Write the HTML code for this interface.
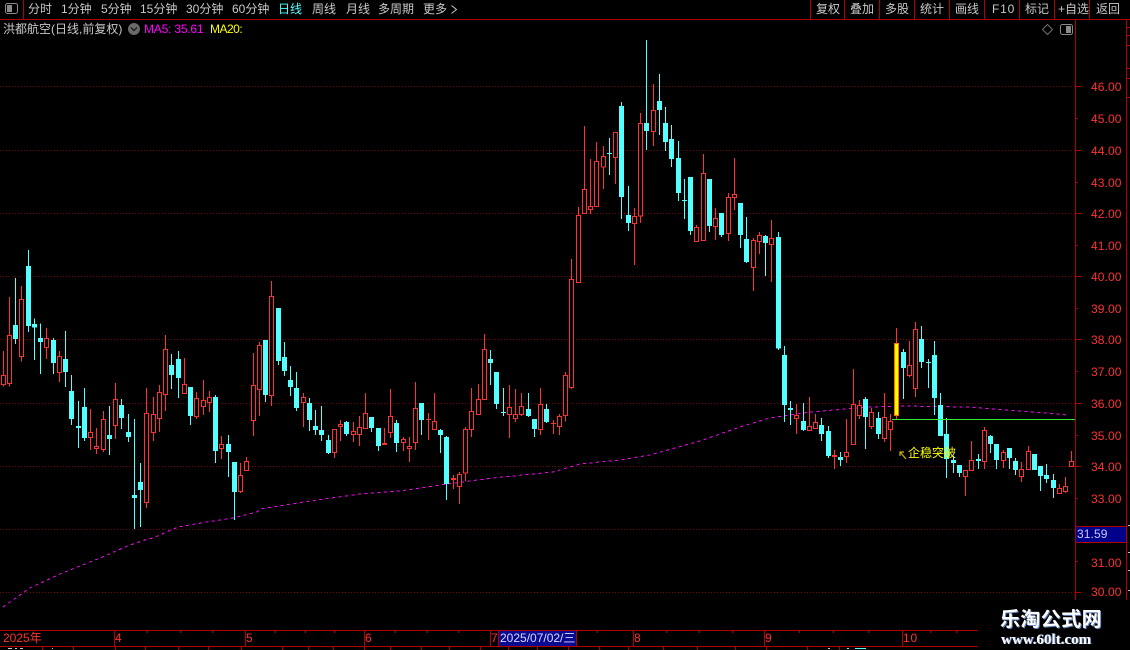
<!DOCTYPE html>
<html><head><meta charset="utf-8">
<style>
html,body{margin:0;padding:0;background:#000;width:1130px;height:650px;overflow:hidden}
#p{position:relative;width:1130px;height:650px;overflow:hidden;background:#000;font-family:"Liberation Sans","WenQuanYi Zen Hei","Noto Sans CJK SC",sans-serif;font-size:12px;color:#c8c8c8}
#p span{position:absolute;white-space:nowrap;line-height:14px;height:14px}
.t span{top:2px}
.a span{left:1091px;color:#ff3232;letter-spacing:.1px}
.b span{top:631px;color:#ff3232}
svg{position:absolute;left:0;top:0}
</style></head><body><div id="p">
<svg width="1130" height="650" viewBox="0 0 1130 650" fill="none">
<g stroke="#780000" stroke-dasharray="1 2" shape-rendering="crispEdges">
<path d="M0 86.5H1075M0 150.5H1075M0 213.5H1075M0 276.5H1075M0 339.5H1075M0 403.5H1075M0 466.5H1075M0 529.5H1075M0 592.5H1075"/>
</g>
<path stroke="#ff00ff" stroke-dasharray="3 3.5" shape-rendering="crispEdges" d="M3 607L30 588L60 574L100 558L130 545L148 539L153 538L178 527L207 522L233 518L257 512L260 509L310 501L360 494L400 491L447 484L493 478L553 472L580 464L620 460L650 455L700 441L740 427L770 418L810 412L870 407L900 406L970 407L1020 411L1068 415"/>
<g stroke-width="3" shape-rendering="crispEdges">
<g transform="translate(.167,240) scale(.33333)">
<path stroke="#ff3232" d="M10 333V440M28 171V440M64 138V365M139 264V357M178 333V426M271 507V630M289 564V642M310 513V636M346 429V597M439 444V804M460 471V603M478 435V576M496 285V513M553 354V461M589 456V537M610 420V525M628 453V516M664 588V657M721 669V759M739 651V693M760 339V588M778 306V528"/>
<path stroke="#ff3232" fill="#000" d="M4 407h12V433h-12zM22 287h12V430h-12zM58 179h12V349h-12zM133 296h12V322h-12zM172 350h12V398h-12zM265 578h12V592h-12zM283 620h12V625h-12zM304 539h12V628h-12zM340 479h12V556h-12zM433 521h12V787h-12zM454 524h12V577h-12zM472 458h12V535h-12zM490 329h12V463h-12zM547 434h12V460h-12zM583 476h12V529h-12zM604 482h12V499h-12zM622 473h12V487h-12zM658 614h12V625h-12zM715 707h12V754h-12zM733 665h12V691h-12zM754 437h12V541h-12zM772 317h12V448h-12z"/>
<path stroke="#54ffff" d="M46 114V312M85 30V276M103 235V360M121 250V402M160 294V402M196 273V441M214 405V555M235 483V624M253 444V603M328 498V645M364 477V567M385 522V606M403 537V867M421 669V861M514 342V447M535 333V474M571 441V555M646 465V669M685 585V711M703 666V840"/>
<path stroke="#54ffff" fill="#54ffff" d="M40 256h12V296h-12zM79 79h12V257h-12zM97 253h12V261h-12zM115 295h12V305h-12zM154 301h12V368h-12zM190 358h12V395h-12zM208 454h12V536h-12zM229 559h12V563h-12zM247 502h12V593h-12zM322 586h12V596h-12zM358 496h12V533h-12zM379 577h12V590h-12zM397 766h12V773h-12zM415 727h12V749h-12zM508 376h12V404h-12zM529 358h12V413h-12zM565 442h12V527h-12zM640 472h12V632h-12zM679 613h12V635h-12zM697 667h12V755h-12z"/>
</g>
<g transform="translate(260.167,280) scale(.33333)">
<path stroke="#ff3232" d="M34 3V378M130 339V441M223 447V534M241 420V483M280 426V486M298 408V498M316 339V447M373 444V495M391 327V474M430 471V513M448 471V546M466 306V510M505 399V480M523 339V450M580 585V627M598 576V672M616 441V603M634 324V471M655 312V405M673 162V360M748 315V474M766 327V426M784 339V408M841 324V465M880 420V462M898 402V465M916 276V425"/>
<path stroke="#ff3232" fill="#000" d="M28 50h12V346h-12zM124 353h12V368h-12zM217 449h12V517h-12zM235 434h12V439h-12zM274 455h12V464h-12zM292 443h12V464h-12zM310 401h12V445h-12zM367 490h12V494h-12zM385 410h12V457h-12zM424 479h12V487h-12zM442 500h12V506h-12zM460 386h12V487h-12zM499 418h12V419h-12zM517 425h12V448h-12zM574 595h12V599h-12zM592 584h12V619h-12zM610 449h12V579h-12zM628 395h12V448h-12zM649 359h12V403h-12zM667 209h12V358h-12zM742 383h12V403h-12zM760 404h12V415h-12zM778 380h12V403h-12zM835 374h12V448h-12zM874 430h12V431h-12zM892 410h12V439h-12zM910 286h12V407h-12z"/>
<path stroke="#54ffff" d="M16 180V366M55 84V255M73 186V288M91 258V348M109 276V393M148 354V453M166 390V465M184 378V483M205 465V522M259 423V468M334 411V456M355 444V513M409 420V516M484 369V465M541 447V519M559 468V660M691 210V315M709 276V387M730 324V408M805 339V411M823 417V471M859 372V429"/>
<path stroke="#54ffff" fill="#54ffff" d="M10 181h12V344h-12zM49 85h12V242h-12zM67 232h12V272h-12zM85 301h12V320h-12zM103 325h12V383h-12zM142 370h12V419h-12zM160 439h12V449h-12zM178 451h12V464h-12zM199 481h12V518h-12zM253 427h12V461h-12zM328 412h12V443h-12zM349 445h12V497h-12zM403 430h12V488h-12zM478 370h12V419h-12zM535 451h12V464h-12zM553 472h12V611h-12zM685 238h12V248h-12zM703 277h12V371h-12zM724 397h12V398h-12zM799 388h12V407h-12zM817 418h12V446h-12zM853 388h12V425h-12z"/>
</g>
<g transform="translate(560.167,30) scale(.33333)">
<path stroke="#ff3232" d="M34 687V1077M55 531V759M73 288V552M91 387V552M109 336V531M130 348V477M166 307V462M223 534V705M241 249V579M280 162V348M409 585V636M430 372V633M466 534V630M505 489V633M523 384V540M580 624V783M598 606V672M634 570V756"/>
<path stroke="#ff3232" fill="#000" d="M28 748h12V1073h-12zM49 557h12V757h-12zM67 479h12V550h-12zM85 530h12V538h-12zM103 395h12V529h-12zM124 380h12V411h-12zM160 308h12V383h-12zM217 560h12V580h-12zM235 281h12V558h-12zM274 242h12V304h-12zM403 593h12V634h-12zM424 431h12V631h-12zM460 566h12V589h-12zM499 503h12V610h-12zM517 494h12V502h-12zM574 632h12V712h-12zM592 617h12V634h-12zM628 626h12V643h-12z"/>
<path stroke="#54ffff" d="M148 324V435M184 216V567M205 468V603M259 30V360M298 132V315M316 231V363M334 285V411M355 333V513M373 447V567M391 441V615M448 447V606M484 549V621M541 519V654M559 561V699M616 615V738M655 606V960"/>
<path stroke="#54ffff" fill="#54ffff" d="M142 370h12V371h-12zM178 229h12V500h-12zM199 556h12V578h-12zM253 280h12V302h-12zM292 214h12V239h-12zM310 280h12V335h-12zM328 328h12V386h-12zM349 385h12V488h-12zM367 511h12V512h-12zM385 442h12V602h-12zM442 448h12V587h-12zM478 550h12V614h-12zM535 520h12V614h-12zM553 628h12V695h-12zM610 619h12V638h-12zM649 622h12V954h-12z"/>
</g>
<g transform="translate(770.167,310) scale(.33333)">
<path stroke="#ff3232" d="M79 282V372M118 261V363M136 312V357M193 420V477M229 327V459M250 177V405M268 270V327M304 294V357M343 249V396M361 312V423M379 54V330M418 93V201M436 36V261M586 480V558M604 393V483M643 351V477M700 420V474M754 456V516M775 408V480M868 522V552M886 501V549M904 423V471"/>
<path stroke="#ff3232" fill="#000" d="M73 316h12V326h-12zM112 350h12V361h-12zM130 338h12V356h-12zM187 436h12V440h-12zM223 428h12V440h-12zM244 284h12V403h-12zM262 287h12V317h-12zM298 308h12V350h-12zM337 323h12V386h-12zM355 335h12V359h-12zM412 167h12V197h-12zM430 59h12V235h-12zM580 482h12V499h-12zM598 452h12V481h-12zM637 362h12V454h-12zM694 428h12V451h-12zM748 479h12V499h-12zM769 425h12V478h-12zM862 536h12V550h-12zM880 530h12V544h-12zM898 455h12V469h-12z"/>
<path stroke="#54ffff" d="M43 108V336M61 273V345M100 279V363M154 324V393M175 348V444M211 426V468M286 261V417M325 306V387M400 117V267M454 48V174M475 147V234M493 93V315M511 249V378M529 324V504M550 438V489M568 465V501M625 432V477M661 375V429M679 402V477M718 414V477M736 444V495M793 432V480M811 468V543M829 462V519M850 492V564"/>
<path stroke="#54ffff" fill="#54ffff" d="M37 136h12V284h-12zM55 295h12V299h-12zM94 334h12V359h-12zM148 346h12V371h-12zM169 364h12V437h-12zM205 442h12V449h-12zM280 268h12V320h-12zM319 325h12V371h-12zM394 127h12V173h-12zM448 88h12V155h-12zM469 157h12V158h-12zM487 136h12V263h-12zM505 286h12V377h-12zM523 373h12V446h-12zM544 451h12V458h-12zM562 466h12V488h-12zM619 448h12V452h-12zM655 379h12V401h-12zM673 403h12V449h-12zM712 415h12V443h-12zM730 454h12V479h-12zM787 433h12V479h-12zM805 469h12V497h-12zM823 496h12V506h-12zM844 511h12V533h-12z"/>
<path stroke="#ff7000" fill="#ffff00" d="M373 100h12V317h-12z"/>
</g>
</g>
<g shape-rendering="crispEdges">
<path stroke="#30f030" d="M892 419.5H1075"/>
<path stroke="#b00000" d="M0 19.5H1130M23.5 0V19M810.5 0V19M844.5 0V19M879.5 0V19M914.5 0V19M949.5 0V19M984.5 0V19M1019.5 0V19M1054.5 0V19M1089.5 0V19M1075.5 19V600M1126.5 19V600M0 630.5H978M0 646.5H978M114.5 630V646M245.5 630V646M364.5 630V646M490.5 630V646M633.5 630V646M764.5 630V646M902.5 630V646"/>
<path stroke="#b00000" d="M1075 86.5h6M1075 118.5h3M1075 150.5h6M1075 182.5h3M1075 213.5h6M1075 245.5h3M1075 276.5h6M1075 308.5h3M1075 339.5h6M1075 371.5h3M1075 403.5h6M1075 435.5h3M1075 466.5h6M1075 498.5h3M1075 561.5h3M1075 592.5h6M1127 27.5h3M1127 35.5h3M1127 45.5h3M1127 68.5h3M1127 78.5h3M1127 97.5h3"/>
<path stroke="#b00000" d="M147.500 630v3M180.500 630v3M212.500 630v3M275.500 630v3M305.500 630v3M334.500 630v3M395.500 630v3M427.500 630v3M458.500 630v3M597.500 630v3M666.500 630v3M699.500 630v3M732.500 630v3M799.500 630v3M833.500 630v3M868.500 630v3M930.500 630v3M956.500 630v3M42.500 647v3M73.500 647v3M115.500 647v3M145.500 647v3M178.500 647v3M208.500 647v3M241.500 647v3M282.500 647v3M308.500 647v3M333.500 647v3M364.500 647v3M390.500 647v3M421.500 647v3M449.500 647v3M480.500 647v3M508.500 647v3M537.500 647v3M568.500 647v3M599.500 647v3M628.500 647v3M663.500 647v3M697.500 647v3M735.500 647v3M766.500 647v3M807.500 647v3M839.500 647v3"/>
<path stroke="#c8c8c8" d="M8 648.500h4M15 648.500h2M20 648.500h3M52 648.500h1M828 648.500h2"/>
<path stroke="#54ffff" d="M847 648.500h2M855 648.500h11"/>
<path stroke="#c0c0c0" d="M1128 525.500h2M1128 552.500h2M1128 570.500h2M1128 590.500h2"/>
<rect x="499" y="631" width="77" height="15" fill="#0a0a90"/>
<path stroke="#b00000" d="M498.500 630V646M576.500 630V646"/>
<rect x="1076" y="527" width="50" height="15" fill="#00008b"/>
<path stroke="#b00000" d="M1075 526.500H1127M1075 542.500H1127"/>
</g>
<rect x="5.500" y="3.500" width="12" height="10" rx="2" stroke="#8a8a8a" fill="#000"/>
<rect x="7" y="5" width="5" height="7" fill="#8a8a8a"/>
<rect x="1060.500" y="24.500" width="12" height="10" rx="2" stroke="#8a8a8a" fill="#000"/>
<rect x="1066" y="26" width="5" height="7" fill="#8a8a8a"/>
<path d="M1047.500 24.500L1052.500 29.500L1047.500 34.500L1042.500 29.500Z" stroke="#707070"/>
<circle cx="134" cy="29" r="6" fill="#6a6a6a"/>
<path d="M131 27.500L134 30.500L137 27.500" stroke="#111" stroke-width="1.200"/>
<path d="M451.500 5.500L456.500 9.500L451.500 13.500" stroke="#c8c8c8"/>
<path d="M906 459L900.500 452.500M900 456V452H904" stroke="#c8b400" stroke-width="1.200"/>
</svg>
<div class="t">
<span style="left:28px">分时</span><span style="left:61px">1分钟</span><span style="left:101px">5分钟</span><span style="left:140px">15分钟</span><span style="left:186px">30分钟</span><span style="left:232px">60分钟</span><span style="left:278px;color:#54ffff">日线</span><span style="left:312px">周线</span><span style="left:346px">月线</span><span style="left:378px">多周期</span><span style="left:423px">更多</span>
<span style="left:816px">复权</span><span style="left:850px">叠加</span><span style="left:885px">多股</span><span style="left:920px">统计</span><span style="left:955px">画线</span><span style="left:992px;letter-spacing:.8px">F10</span><span style="left:1025px">标记</span><span style="left:1058px">+自选</span><span style="left:1096px">返回</span>
</div>
<span style="left:3px;top:22px">洪都航空(日线,前复权)</span>
<span style="left:144px;top:22px;color:#ff00ff;letter-spacing:-.2px">MA5: 35.61</span>
<span style="left:210px;top:22px;color:#ffff00;letter-spacing:-.5px">MA20:</span>
<div class="a">
<span style="top:80px">46.00</span><span style="top:112px">45.00</span><span style="top:144px">44.00</span><span style="top:176px">43.00</span><span style="top:207px">42.00</span><span style="top:239px">41.00</span><span style="top:270px">40.00</span><span style="top:302px">39.00</span><span style="top:333px">38.00</span><span style="top:365px">37.00</span><span style="top:397px">36.00</span><span style="top:429px">35.00</span><span style="top:460px">34.00</span><span style="top:492px">33.00</span><span style="top:556px">31.00</span><span style="top:585px">30.00</span>
</div>
<span style="left:1077px;top:527px;color:#c8c8ff;letter-spacing:.1px">31.59</span>
<span style="left:908px;top:446px;color:#ffff00">企稳突破</span>
<div class="b">
<span style="left:3px">2025年</span><span style="left:115px">4</span><span style="left:246px">5</span><span style="left:365px">6</span><span style="left:491px">7</span><span style="left:634px">8</span><span style="left:765px">9</span><span style="left:903px;letter-spacing:.8px">10</span>
<span style="left:500px;color:#d8d8ff">2025/07/02/三</span>
</div>
<span style="left:1000px;top:607px;height:22px;line-height:22px;font:bold 20px/22px 'Noto Sans CJK SC',sans-serif;color:#fff;text-shadow:1px 1px 0 #6080c0;letter-spacing:.4px">乐淘公式网</span>
<span style="left:1001px;top:633px;font:bold 15px/14px 'Liberation Serif',serif;color:#fff;text-shadow:1px 0 0 #6080c0">www.60lt.com</span>
</div></body></html>
